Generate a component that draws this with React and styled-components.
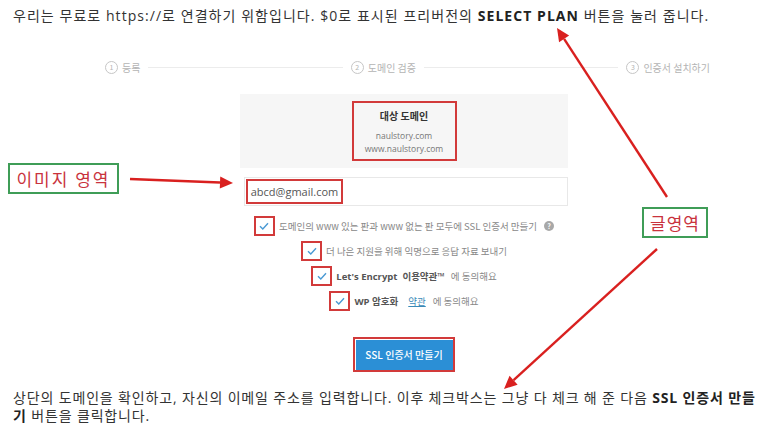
import React from "react";
import styled, { createGlobalStyle } from "styled-components";

const GlobalStyle = createGlobalStyle`
  html, body {
    margin: 0;
    padding: 0;
    background: #ffffff;
  }
  body {
    font-family: "Open Sans", "Noto Sans CJK KR", sans-serif;
    color: #333333;
  }
`;

const Page = styled.div`
  position: relative;
  width: 768px;
  height: 432px;
  overflow: hidden;
  display: flex;
  flex-direction: column;
`;

const Paragraph = styled.p`
  margin: 0;
  padding: ${(p) => p.pad || "0 0 0 13px"};
  font-size: 14px;
  line-height: 18px;
  letter-spacing: ${(p) => p.ls || 0}px;
  color: #333;
  white-space: nowrap;

  b {
    font-weight: 700;
    color: #222;
  }
`;

const Figure = styled.div`
  display: flex;
  flex-direction: column;
`;

const Stepper = styled.div`
  margin-top: 36px;
  height: 12px;
  display: flex;
  align-items: center;
  gap: 8px;
  padding: 0 58px 0 105px;
`;

const Step = styled.div`
  display: flex;
  align-items: center;
  gap: 4px;
  font-family: "Noto Sans CJK KR", sans-serif;
  font-size: 10px;
  color: #b4b4b4;
  white-space: nowrap;
`;

const StepNum = styled.span`
  width: 11px;
  height: 11px;
  border: 1px solid #c6c6c6;
  border-radius: 50%;
  display: flex;
  align-items: center;
  justify-content: center;
  font-size: 7px;
  line-height: 1;
`;

const StepLine = styled.div`
  flex: 1;
  height: 1px;
  background: #ececec;
`;

const Column = styled.div`
  margin: 21px 0 0 240px;
  width: 328px;
  display: flex;
  flex-direction: column;
  align-items: center;
`;

const Panel = styled.div`
  width: 328px;
  height: 74px;
  box-sizing: border-box;
  padding-top: 7px;
  background: #f6f6f6;
  display: flex;
  flex-direction: column;
  align-items: center;
`;

const RedBox = styled.div`
  box-sizing: border-box;
  border: 2px solid #d23a3a;
  width: ${(p) => p.w}px;
  height: ${(p) => p.h}px;
  display: flex;
  flex-direction: ${(p) => (p.col ? "column" : "row")};
  align-items: center;
  justify-content: center;
  flex-shrink: 0;
`;

const DomainTitle = styled.div`
  font-family: "Noto Sans CJK KR", sans-serif;
  font-size: 10px;
  font-weight: 700;
  color: #333;
  margin-bottom: 6px;
`;

const DomainName = styled.div`
  font-family: "Open Sans", sans-serif;
  font-size: 8.5px;
  line-height: 13px;
  color: #777;
`;

const EmailField = styled.div`
  align-self: flex-end;
  margin-top: 9px;
  width: 324px;
  height: 29px;
  box-sizing: border-box;
  border: 1px solid #e8e8e8;
  background: #fff;
  display: flex;
  align-items: center;
  padding-left: 1px;
`;

const EmailText = styled.span`
  font-family: "Open Sans", sans-serif;
  font-size: 11px;
  color: #555;
`;

const CheckRow = styled.div`
  margin-top: ${(p) => p.mt}px;
  height: 20px;
  display: flex;
  align-items: center;
  gap: 4px;
  font-family: "Noto Sans CJK KR", sans-serif;
  font-size: 9.5px;
  color: #888;
  white-space: nowrap;

  b {
    font-family: "Open Sans", "Noto Sans CJK KR", sans-serif;
    font-weight: 700;
    color: #555;
  }
`;

const Link = styled.span`
  color: #3b8ab8;
  text-decoration: underline;
  margin: 0 3px 0 6px;
`;

const Help = styled.span`
  width: 10px;
  height: 10px;
  border-radius: 50%;
  background: #a8a8a8;
  color: #fff;
  font-size: 7px;
  font-weight: 700;
  display: inline-flex;
  align-items: center;
  justify-content: center;
  margin-left: 3px;
`;

const ButtonFrame = styled(RedBox)`
  margin-top: 26px;
`;

const PrimaryButton = styled.div`
  width: 97px;
  height: 30px;
  background: #2b8fd6;
  color: #fff;
  font-family: "Noto Sans CJK KR", sans-serif;
  font-size: 10px;
  font-weight: 500;
  display: flex;
  align-items: center;
  justify-content: center;
`;

const Bottom = styled(Paragraph)`
  margin-top: 17px;
`;

const Label = styled.div`
  position: absolute;
  left: ${(p) => p.x}px;
  top: ${(p) => p.y}px;
  width: ${(p) => p.w}px;
  height: 31px;
  box-sizing: border-box;
  border: 2px solid #3f9d57;
  background: #fff;
  display: flex;
  align-items: center;
  justify-content: center;
  font-family: "Noto Sans CJK KR", sans-serif;
  font-size: 17px;
  letter-spacing: ${(p) => p.ls || 0}px;
  color: #c9333d;
`;

const Overlay = styled.svg`
  position: absolute;
  left: 0;
  top: 0;
  pointer-events: none;
`;

function Check() {
  return (
    <svg width="10" height="8" viewBox="0 0 10 8">
      <path d="M1 4.2 L3.8 7 L9 1.2" fill="none" stroke="#4a9ad4" strokeWidth="1.4" />
    </svg>
  );
}

function CheckBox() {
  return (
    <RedBox w={21} h={20}>
      <Check />
    </RedBox>
  );
}

function Arrow({ x1, y1, x2, y2 }) {
  const dx = x2 - x1;
  const dy = y2 - y1;
  const len = Math.hypot(dx, dy);
  const ux = dx / len;
  const uy = dy / len;
  const hl = 13;
  const hw = 6;
  const bx = x2 - ux * hl;
  const by = y2 - uy * hl;
  const pts = [
    [x2, y2],
    [bx - uy * hw, by + ux * hw],
    [bx + uy * hw, by - ux * hw],
  ]
    .map((p) => p.join(","))
    .join(" ");
  return (
    <g>
      <line x1={x1} y1={y1} x2={bx} y2={by} stroke="#d9201f" strokeWidth="2.4" />
      <polygon points={pts} fill="#d9201f" />
    </g>
  );
}

export default function App() {
  return (
    <Page>
      <GlobalStyle />
      <Paragraph pad="7px 0 0 13px" ls={1.05}>
        우리는 무료로 https://로 연결하기 위함입니다. $0로 표시된 프리버전의 <b>SELECT PLAN</b> 버튼을 눌러 줍니다.
      </Paragraph>

      <Figure>
        <Stepper>
          <Step>
            <StepNum>1</StepNum>등록
          </Step>
          <StepLine />
          <Step>
            <StepNum>2</StepNum>도메인 검증
          </Step>
          <StepLine />
          <Step>
            <StepNum>3</StepNum>인증서 설치하기
          </Step>
        </Stepper>

        <Column>
          <Panel>
            <RedBox w={105} h={60} col>
              <DomainTitle>대상 도메인</DomainTitle>
              <DomainName>naulstory.com</DomainName>
              <DomainName>www.naulstory.com</DomainName>
            </RedBox>
          </Panel>

          <EmailField>
            <RedBox w={97} h={25}>
              <EmailText>abcd@gmail.com</EmailText>
            </RedBox>
          </EmailField>

          <CheckRow mt={10}>
            <CheckBox />
            도메인의 www 있는 판과 www 없는 판 모두에 SSL 인증서 만들기
            <Help>?</Help>
          </CheckRow>
          <CheckRow mt={5}>
            <CheckBox />
            더 나은 지원을 위해 익명으로 응답 자료 보내기
          </CheckRow>
          <CheckRow mt={5}>
            <CheckBox />
            <b>Let's Encrypt&nbsp; 이용약관™</b>&nbsp;에 동의해요
          </CheckRow>
          <CheckRow mt={5}>
            <CheckBox />
            <b>WP 암호화</b>
            <Link>약관</Link>에 동의해요
          </CheckRow>

          <ButtonFrame w={102} h={35}>
            <PrimaryButton>SSL 인증서 만들기</PrimaryButton>
          </ButtonFrame>
        </Column>
      </Figure>

      <Bottom ls={0.85}>
        상단의 도메인을 확인하고, 자신의 이메일 주소를 입력합니다. 이후 체크박스는 그냥 다 체크 해 준 다음 <b>SSL 인증서 만들</b>
        <br />
        <b>기</b> 버튼을 클릭합니다.
      </Bottom>

      <Label x={8} y={163} w={111} ls={2}>
        이미지 영역
      </Label>
      <Label x={642} y={207} w={66} ls={1}>
        글영역
      </Label>

      <Overlay width="768" height="432" viewBox="0 0 768 432">
        <Arrow x1={130} y1={179} x2={233} y2={183} />
        <Arrow x1={667} y1={197} x2={557} y2={28} />
        <Arrow x1={657} y1={249} x2={504} y2={389} />
      </Overlay>
    </Page>
  );
}
